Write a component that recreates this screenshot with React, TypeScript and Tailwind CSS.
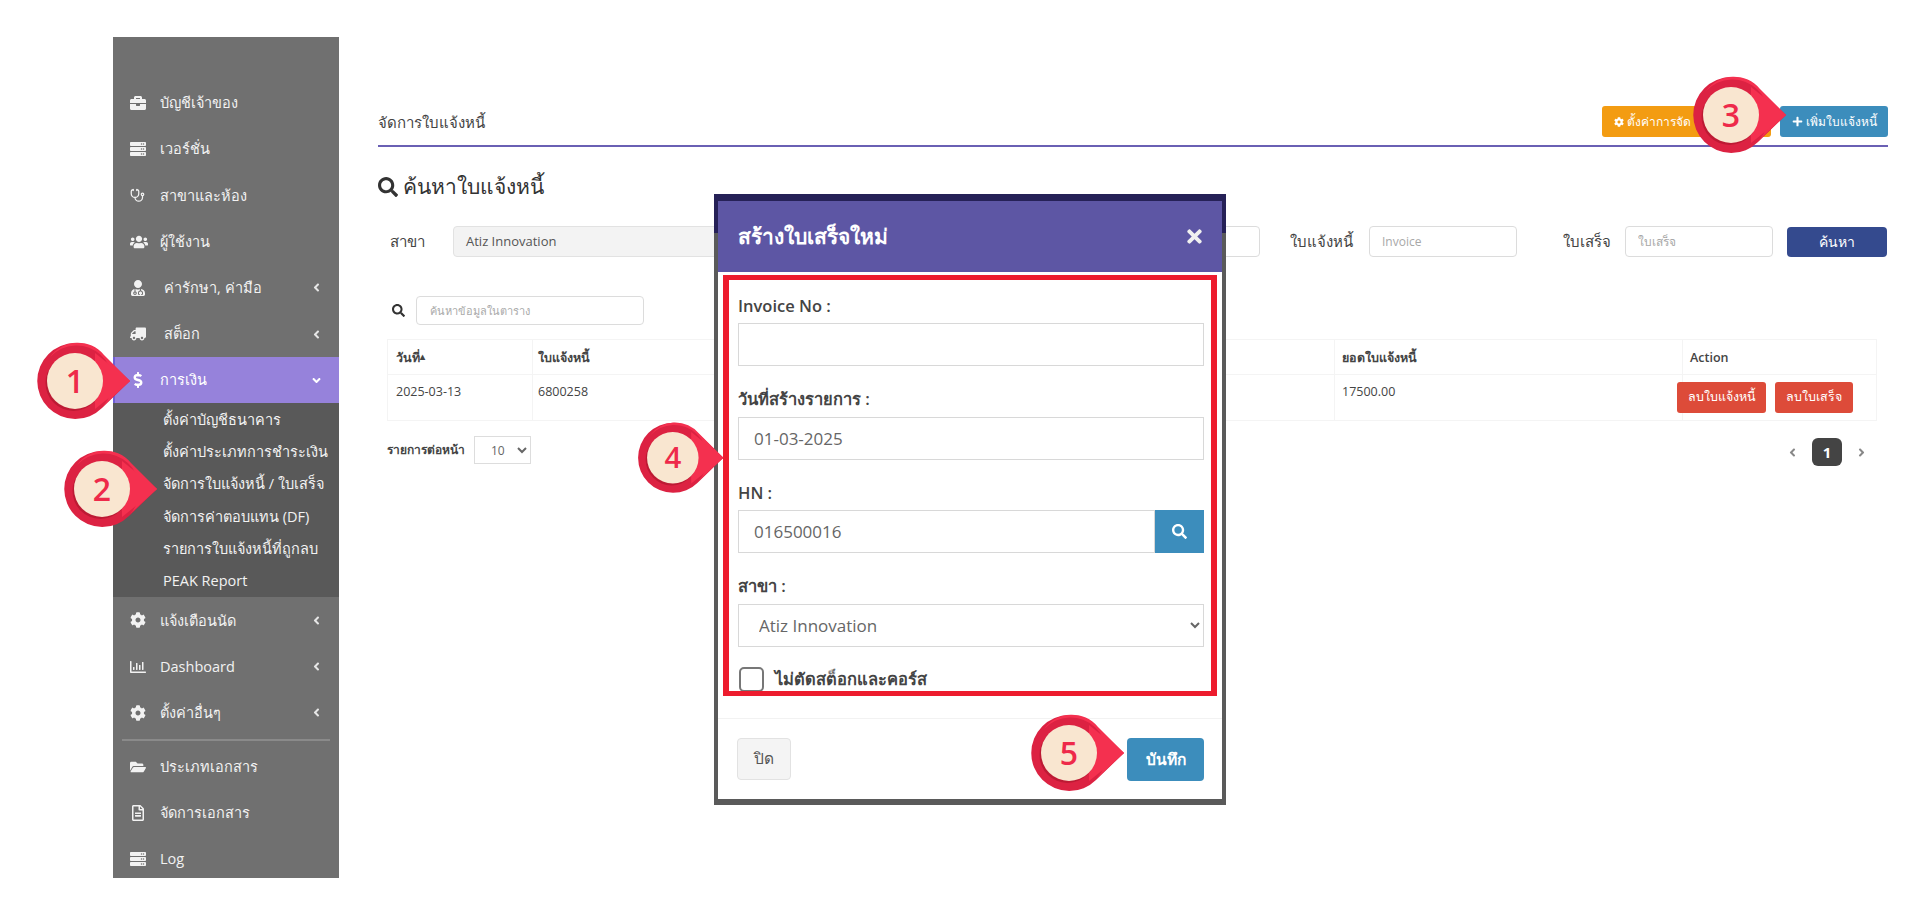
import {
  FaAngleDown,
  FaAngleLeft,
  FaAngleRight,
  FaBriefcase,
  FaCog,
  FaDollarSign,
  FaFolderOpen,
  FaPlus,
  FaRegChartBar,
  FaRegFileAlt,
  FaSearch,
  FaServer,
  FaTimes,
  FaTruck,
  FaUserMd,
  FaUsers,
} from "react-icons/fa";
import { Stethoscope } from "lucide-react";
import type { ReactNode } from "react";

const FONT = "font-['Open_Sans','Noto_Sans',sans-serif]";

function MenuItem({
  icon,
  label,
  arrow,
  indent,
}: {
  icon: ReactNode;
  label: string;
  arrow?: boolean;
  indent?: boolean;
}) {
  return (
    <div className="flex h-[46.2px] items-center text-[14.5px] text-[#f2f2f2]">
      <span className="flex w-[47px] shrink-0 justify-start pl-[17px] text-[16px]">{icon}</span>
      <span className={indent ? "ml-[4px]" : ""}>{label}</span>
      {arrow && <FaAngleLeft className="ml-auto mr-[16px] text-[13px] text-[#e6e6e6]" />}
    </div>
  );
}

function Sidebar() {
  const subItems = [
    "ตั้งค่าบัญชีธนาคาร",
    "ตั้งค่าประเภทการชำระเงิน",
    "จัดการใบแจ้งหนี้ / ใบเสร็จ",
    "จัดการค่าตอบแทน (DF)",
    "รายการใบแจ้งหนี้ที่ถูกลบ",
    "PEAK Report",
  ];
  return (
    <aside className="ml-[113px] mt-[37px] h-[841px] w-[226px] shrink-0 overflow-hidden bg-[#707070] pt-[43px]">
      <MenuItem icon={<FaBriefcase />} label="บัญชีเจ้าของ" />
      <MenuItem icon={<FaServer />} label="เวอร์ชั่น" />
      <MenuItem icon={<Stethoscope size={15} strokeWidth={2} />} label="สาขาและห้อง" />
      <MenuItem icon={<FaUsers className="text-[18px]" />} label="ผู้ใช้งาน" />
      <MenuItem icon={<FaUserMd />} label="ค่ารักษา, ค่ามือ" arrow indent />
      <MenuItem icon={<FaTruck className="-scale-x-100" />} label="สต็อก" arrow indent />
      <div className="flex h-[46.2px] items-center border-l-2 border-[#6f5fd6] bg-[#9682db] text-[14.5px] text-white">
        <span className="flex w-[45px] shrink-0 pl-[15px] text-[16px]">
          <FaDollarSign />
        </span>
        <span>การเงิน</span>
        <FaAngleDown className="ml-auto mr-[16px] text-[13px]" />
      </div>
      <div className="flex h-[194px] flex-col justify-center bg-[#595959]">
        {subItems.map((item) => (
          <div key={item} className="flex h-[32.3px] items-center pl-[50px] text-[14.5px] text-[#f2f2f2]">
            {item}
          </div>
        ))}
      </div>
      <MenuItem icon={<FaCog />} label="แจ้งเตือนนัด" arrow />
      <MenuItem icon={<FaRegChartBar />} label="Dashboard" arrow />
      <MenuItem icon={<FaCog />} label="ตั้งค่าอื่นๆ" arrow />
      <div className="mx-[9px] my-[3px] h-[2px] bg-[#8a8a8a]" />
      <MenuItem icon={<FaFolderOpen />} label="ประเภทเอกสาร" />
      <MenuItem icon={<FaRegFileAlt />} label="จัดการเอกสาร" />
      <MenuItem icon={<FaServer />} label="Log" />
    </aside>
  );
}

function SearchRow() {
  const inputClass =
    "h-[31px] rounded-[4px] border border-[#dcdcdc] bg-white px-[12px] text-[12px] placeholder:text-[#a8a8a8]";
  return (
    <div className="mt-[24px] flex h-[31px] items-center text-[15px] text-[#444]">
      <span className="ml-[12px] w-[63px]">สาขา</span>
      <div className="flex h-[31px] w-[350px] items-center rounded-[4px] border border-[#e2e2e2] bg-[#f3f3f3] pl-[12px] text-[13px] text-[#555]">
        Atiz Innovation
      </div>
      <input readOnly className={`${inputClass} ml-[296px] w-[161px]`} />
      <span className="ml-[30px] w-[79px]">ใบแจ้งหนี้</span>
      <input readOnly placeholder="Invoice" className={`${inputClass} w-[148px]`} />
      <span className="ml-[46px] w-[62px]">ใบเสร็จ</span>
      <input readOnly placeholder="ใบเสร็จ" className={`${inputClass} w-[148px]`} />
      <button className="ml-[14px] h-[30px] w-[100px] rounded-[4px] bg-[#344a8e] text-[14px] text-white">ค้นหา</button>
    </div>
  );
}

function DataTable() {
  const cell = "border border-[#f4f4f4] px-[7px] text-left align-top";
  return (
    <table className="mt-[14px] w-[1490px] table-fixed border-collapse text-[12.5px] text-[#444]">
      <thead>
        <tr className="h-[35px] font-semibold">
          <th className={`${cell} w-[145px] !align-middle !pl-[8px] pt-[2px] font-semibold`}>
            วันที่<span className="align-[2px] text-[10px]">▴</span>
          </th>
          <th className={`${cell} w-[400px] !align-middle !pl-[5px] pt-[2px] font-semibold`}>ใบแจ้งหนี้</th>
          <th className={`${cell} w-[402px] !align-middle font-semibold`} />
          <th className={`${cell} w-[348px] !align-middle pt-[2px] font-semibold`}>ยอดใบแจ้งหนี้</th>
          <th className={`${cell} !align-middle pt-[2px] font-semibold`}>Action</th>
        </tr>
      </thead>
      <tbody>
        <tr className="h-[46px]">
          <td className={`${cell} !pl-[8px] pt-[8px]`}>2025-03-13</td>
          <td className={`${cell} !pl-[5px] pt-[8px]`}>6800258</td>
          <td className={cell} />
          <td className={`${cell} pt-[8px]`}>17500.00</td>
          <td className={`${cell} !pl-0 pt-[7px]`}>
            <div className="-ml-[6px] flex gap-[9px]">
              <button className="h-[31px] w-[89px] rounded-[3px] bg-[#dd4b39] text-[12.5px] text-white">
                ลบใบแจ้งหนี้
              </button>
              <button className="h-[31px] w-[78px] rounded-[3px] bg-[#dd4b39] text-[12.5px] text-white">
                ลบใบเสร็จ
              </button>
            </div>
          </td>
        </tr>
      </tbody>
    </table>
  );
}

function Main() {
  return (
    <main className="ml-[39px] w-[1510px] shrink-0 pt-[106px]">
      <div className="flex h-[41px] items-start justify-between border-b-2 border-[#6a60b4]">
        <h1 className="mt-[5px] text-[15px] text-[#444]">จัดการใบแจ้งหนี้</h1>
        <div className="flex gap-[9px]">
          <button className="flex h-[31px] w-[169px] items-center gap-[3px] rounded-[3px] bg-[#f39c12] pl-[12px] text-[12px] text-white">
            <FaCog className="text-[10px]" />
            ตั้งค่าการจัด
          </button>
          <button className="flex h-[31px] w-[108px] items-center justify-center gap-[3px] rounded-[3px] bg-[#3c8dbc] text-[12px] text-white">
            <FaPlus className="text-[11px]" />
            เพิ่มใบแจ้งหนี้
          </button>
        </div>
      </div>

      <h2 className="mt-[25px] flex h-[30px] items-center gap-[5px] text-[21px] font-medium text-[#333]">
        <FaSearch className="text-[20px]" />
        ค้นหาใบแจ้งหนี้
      </h2>

      <SearchRow />

      <div className="ml-[14px] mt-[39px] flex items-center gap-[11px]">
        <FaSearch className="text-[13px] text-[#333]" />
        <input
          readOnly
          placeholder="ค้นหาข้อมูลในตาราง"
          className="h-[29px] w-[228px] rounded-[4px] border border-[#dcdcdc] bg-white px-[13px] text-[11px] placeholder:text-[#aaa]"
        />
      </div>

      <div className="ml-[9px]">
        <DataTable />
        <div className="mt-[15px] flex items-start justify-between">
          <div className="flex items-center gap-[9px] text-[12px] font-semibold text-[#444]">
            รายการต่อหน้า
            <select className="h-[28px] w-[57px] border border-[#ddd] bg-white pl-[12px] text-[12px] font-normal text-[#666]">
              <option>10</option>
            </select>
          </div>
          <div className="mr-[20px] mt-[2px] flex items-center gap-[13px] text-[#888]">
            <FaAngleLeft className="text-[13px]" />
            <span className="flex h-[28px] w-[30px] items-center justify-center rounded-[6px] bg-[#444] text-[15px] font-bold text-white">
              1
            </span>
            <FaAngleRight className="text-[13px]" />
          </div>
        </div>
      </div>
    </main>
  );
}

function Field({ label, children }: { label: string; children: ReactNode }) {
  return (
    <div>
      <label className="mb-[5px] flex h-[24px] items-center text-[16.5px] font-semibold text-[#444]">{label}</label>
      {children}
    </div>
  );
}

function Modal() {
  const input = "h-[43px] w-full border border-[#d8d8d8] bg-white px-[15px] text-[17px] text-[#666]";
  return (
    <div className="absolute left-[714px] top-[194px] h-[611px] w-[512px] bg-[linear-gradient(#262157_39px,#5a5a5a_39px)] px-[4px] pb-[6px] pt-[7px]">
      <div className="flex h-full flex-col bg-white">
        <div className="flex h-[71px] shrink-0 items-center justify-between bg-[#5d56a4] pl-[20px] pr-[17px] text-white">
          <span className="text-[21px] font-bold">สร้างใบเสร็จใหม่</span>
          <FaTimes className="text-[21px] text-[#f0f0f0]" />
        </div>
        <div className="mx-[5px] mt-[3px] h-[421px] shrink-0 overflow-hidden border-y-[5px] border-x-[6px] border-[#ed1c2e] pl-[9px] pr-[7px] pt-[14px]">
          <div className="flex flex-col gap-[21.6px]">
            <Field label="Invoice No :">
              <input readOnly className={input} />
            </Field>
            <Field label="วันที่สร้างรายการ :">
              <input readOnly defaultValue="01-03-2025" className={input} />
            </Field>
            <Field label="HN :">
              <div className="flex">
                <input readOnly defaultValue="016500016" className={input} />
                <button className="flex h-[43px] w-[49px] shrink-0 items-center justify-center bg-[#3c8dbc] text-[15px] text-white">
                  <FaSearch />
                </button>
              </div>
            </Field>
            <Field label="สาขา :">
              <select className="h-[43px] w-full border border-[#d8d8d8] bg-white pl-[16px] text-[17px] text-[#666]">
                <option>Atiz Innovation</option>
              </select>
            </Field>
          </div>
          <div className="mt-[20px] flex items-center gap-[11px] pl-[1px]">
            <span className="h-[25px] w-[25px] shrink-0 rounded-[5px] border-2 border-[#777] bg-white" />
            <span className="text-[16.5px] font-bold text-[#444]">ไม่ตัดสต็อกและคอร์ส</span>
          </div>
        </div>
        <div className="mt-[22px] flex flex-1 items-start justify-between border-t border-[#f2f2f2] pl-[19px] pr-[18px] pt-[19px]">
          <button className="h-[42px] w-[54px] rounded-[4px] border border-[#e2e2e2] bg-[#f4f4f4] text-[15.5px] text-[#555]">
            ปิด
          </button>
          <button className="h-[43px] w-[77px] rounded-[4px] bg-[#3c8dbc] text-[15.5px] font-semibold text-white">
            บันทึก
          </button>
        </div>
      </div>
    </div>
  );
}

function Marker({ n, x, y, scale = 1 }: { n: number; x: number; y: number; scale?: number }) {
  // x, y = centre of the round part, the tip points right
  return (
    <div
      className="absolute"
      style={{ left: x - 40 * scale, top: y - 40 * scale, width: 100 * scale, height: 80 * scale }}
    >
      <svg viewBox="-40 -40 100 80" className="h-full w-full">
        <path d="M55 0 L27 -27 A38 38 0 1 0 27 27 Z" fill="#dc2242" />
        <path d="M55 0 L29 -26 A34 34 0 0 0 -25 -24 A30 30 0 0 1 28 25 Z" fill="#f4304f" />
        <path d="M55 0 L20 -28 L20 28 Z" fill="#f4304f" />
        <circle cx="-1.5" cy="2" r="28" fill="#bd1a34" />
        <circle cx="0" cy="0" r="28" fill="#f9e6d0" />
      </svg>
      <span
        className={`absolute flex items-center justify-center font-semibold leading-none text-[#ee2a4a] ${FONT}`}
        style={{ left: 20 * scale, top: 20 * scale, width: 40 * scale, height: 40 * scale, fontSize: 32 * scale }}
      >
        {n}
      </span>
    </div>
  );
}

export default function App() {
  return (
    <div className={`relative flex h-[916px] w-[1920px] overflow-hidden bg-white ${FONT}`}>
      <Sidebar />
      <Main />
      <Modal />
      <Marker n={1} x={75} y={381} />
      <Marker n={2} x={102} y={489} />
      <Marker n={3} x={1731} y={115} />
      <Marker n={4} x={673} y={458} scale={0.92} />
      <Marker n={5} x={1069} y={753} />
    </div>
  );
}
